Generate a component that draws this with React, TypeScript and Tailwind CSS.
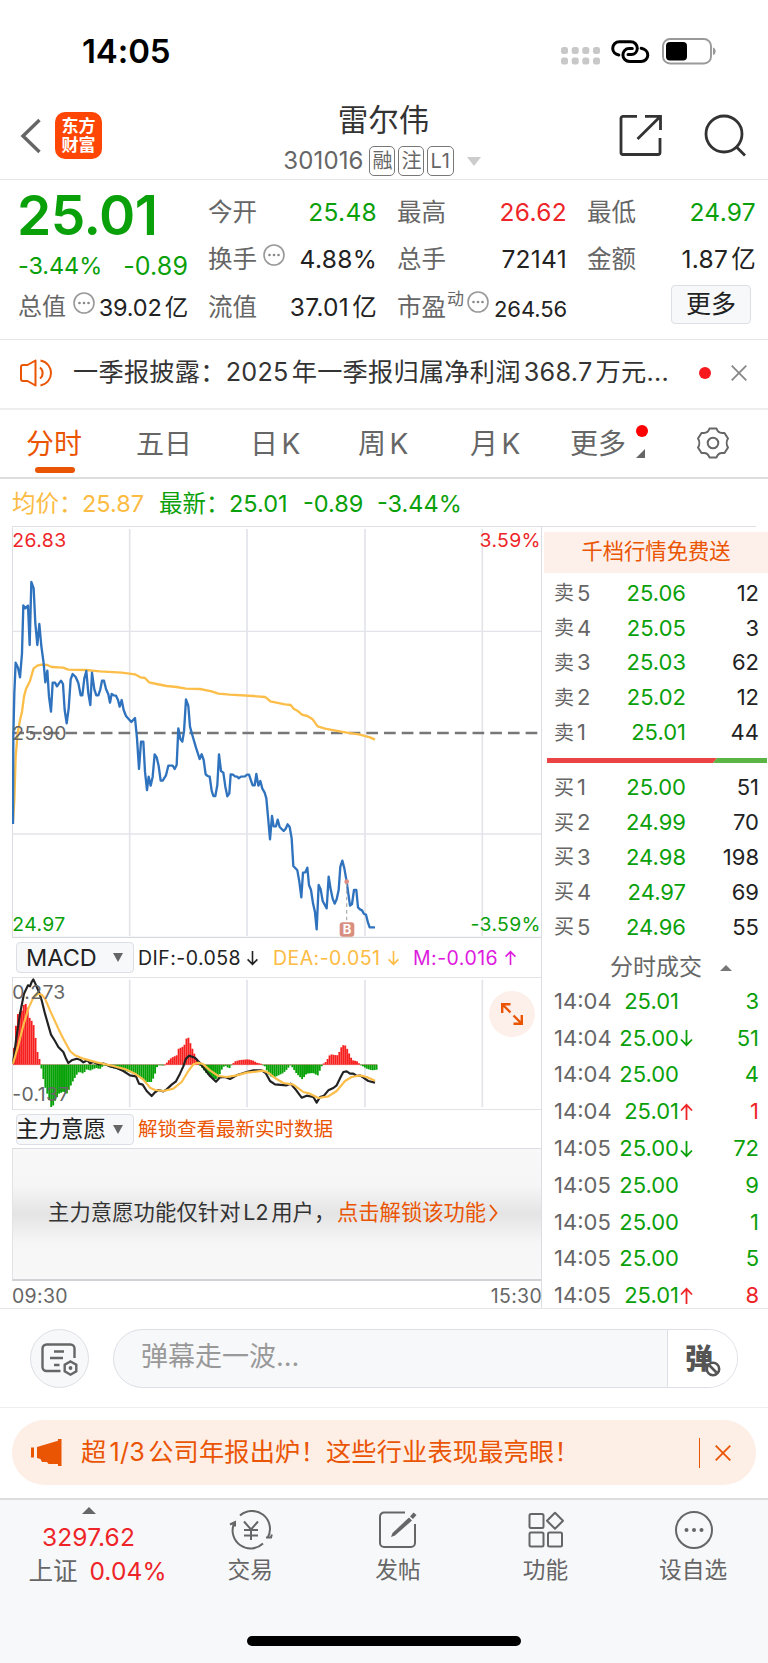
import type { ReactNode } from 'react';

const GREEN = 'text-[#0aa00a]';
const RED = 'text-[#ee2528]';

// 分时线坐标
const PRICE_LINE =
  '39,912 40,650 43,520 47,428 54,443 60,472 66,400 70,256 76,265 84,257 89,375 94,186 101,205 106,310 112,375 118,312 124,378 131,430 136,487 142,452 147,530 153,575 158,488 165,488 171,499 177,490 183,482 189,492 194,570 200,610 206,565 212,478 218,462 227,471 235,489 242,526 247,526 253,475 259,453 265,520 271,555 276,458 283,508 289,526 295,526 301,508 306,482 312,482 318,507 325,523 330,548 335,522 341,526 348,527 354,540 359,560 365,540 371,570 378,588 394,606 405,594 411,655 417,747 423,665 430,665 435,755 441,810 446,770 452,797 458,770 464,703 470,712 476,738 482,782 488,782 498,766 505,737 518,737 524,747 530,735 535,625 541,657 547,665 552,635 558,538 565,558 570,620 576,642 588,683 599,717 605,703 611,720 617,763 623,768 629,770 635,812 640,828 646,828 652,795 657,703 663,753 670,758 676,800 682,829 688,820 692,763 699,764 705,769 712,770 716,775 723,770 735,769 741,764 747,764 753,782 758,796 764,796 769,762 775,797 781,783 787,806 794,818 799,835 804,890 810,958 816,888 821,919 828,919 833,899 839,921 851,933 857,926 863,913 869,921 875,955 880,1038 892,1051 898,1085 904,1132 909,1058 916,1057 922,1043 927,1095 933,1110 939,1150 945,1177 950,1228 956,1095 962,1108 968,1143 980,1165 986,1070 992,1108 998,1136 1004,1151 1010,1138 1016,1110 1021,1040 1027,1022 1033,1045 1040,1085 1050,1157 1056,1152 1062,1110 1069,1110 1074,1162 1080,1168 1086,1171 1092,1182 1098,1184 1104,1208 1109,1222 1125,1222';

const AVG_LINE =
  '39,905 43,840 47,710 53,640 60,600 66,575 72,530 78,507 90,483 97,458 101,445 112,437 123,434 142,435 155,441 189,443 205,449 257,450 300,454 365,458 405,463 421,472 435,474 447,487 470,492 500,498 530,501 558,506 600,507 635,514 655,521 690,524 760,528 795,531 802,536 811,544 855,553 872,555 881,566 892,572 906,584 922,588 938,598 953,619 975,626 1040,638 1077,643 1110,652 1125,659';

const DIF_LINE =
  '39,400 48,330 60,250 72,190 84,165 90,168 95,155 100,147 106,160 118,188 125,210 135,250 145,285 153,313 165,332 175,350 190,365 197,382 205,398 215,390 230,385 240,388 250,396 262,390 270,399 280,395 295,402 312,400 330,408 350,413 370,422 390,435 408,438 417,460 428,463 440,482 455,497 465,486 475,479 490,483 500,477 515,463 528,453 540,430 550,408 558,385 568,376 585,382 600,398 615,418 630,437 648,454 660,441 675,440 690,446 710,435 740,425 760,420 785,420 797,428 810,452 825,462 860,465 872,460 885,475 905,502 920,496 940,500 950,517 960,500 972,496 985,480 1000,473 1010,465 1022,440 1030,425 1040,423 1050,430 1060,430 1070,437 1080,435 1090,442 1105,452 1125,457';

const DEA_LINE =
  '39,400 55,345 70,285 85,235 100,202 115,190 125,193 135,205 150,240 175,295 190,325 210,362 225,375 250,385 290,396 340,407 380,418 405,430 430,448 450,472 465,479 490,482 520,475 545,455 565,422 580,402 595,397 610,402 630,420 655,437 680,440 710,435 740,427 790,421 805,427 825,443 850,458 880,463 910,485 930,490 955,503 985,498 1010,482 1035,452 1055,440 1080,435 1100,440 1125,451';

// MACD 柱的关键点 [x, 柱顶 y]，0 轴在 403
const MACD_ZERO = 403;
const MACD_KEYS = [
  [40, 375], [48, 285], [53, 252], [60, 245], [66, 240], [72, 222], [80, 220], [84, 235], [90, 268], [97, 273], [101, 285],
  [107, 325], [113, 368], [119, 388], [125, 418], [130, 445], [136, 472], [142, 490], [148, 510], [154, 531], [160, 525],
  [166, 510], [177, 490], [190, 484], [202, 490], [208, 475], [220, 450], [232, 430], [238, 424], [250, 430], [262, 414],
  [268, 422], [280, 416], [292, 412], [298, 418], [309, 407], [318, 404], [327, 410], [345, 415], [375, 421], [405, 430],
  [417, 436], [430, 446], [440, 455], [455, 455], [464, 435], [470, 412], [476, 404], [488, 406], [497, 402], [505, 391],
  [515, 382], [530, 375], [536, 355], [547, 350], [553, 345], [559, 325], [566, 322], [571, 338], [577, 355], [583, 370],
  [590, 386], [597, 403], [606, 412], [620, 430], [640, 446], [650, 447], [658, 435], [664, 420], [670, 410], [676, 406],
  [685, 413], [691, 413], [696, 402], [706, 393], [720, 389], [745, 387], [760, 391], [770, 397], [786, 401], [795, 408],
  [806, 432], [815, 441], [825, 440], [850, 428], [860, 418], [872, 404], [880, 415], [890, 430], [907, 447], [920, 430],
  [940, 428], [953, 436], [965, 408], [970, 400], [980, 393], [986, 378], [992, 372], [1012, 375], [1018, 365],
  [1026, 346], [1034, 343], [1040, 352], [1052, 380], [1058, 390], [1070, 392], [1076, 398], [1084, 405], [1100, 415],
  [1116, 420], [1131, 418],
];

const macdBars = () => {
  const bars: { x: number; y: number }[] = [];
  for (let x = 42; x < 1131; x += 5.88) {
    const i = MACD_KEYS.findIndex(([kx]) => kx >= x);
    const [x0, y0] = MACD_KEYS[i - 1];
    const [x1, y1] = MACD_KEYS[i];
    bars.push({ x, y: y0 + ((y1 - y0) * (x - x0)) / (x1 - x0) });
  }
  return bars;
};

const SELLS = [
  ['卖5', '25.06', '12'],
  ['卖4', '25.05', '3'],
  ['卖3', '25.03', '62'],
  ['卖2', '25.02', '12'],
  ['卖1', '25.01', '44'],
];

const BUYS = [
  ['买1', '25.00', '51'],
  ['买2', '24.99', '70'],
  ['买3', '24.98', '198'],
  ['买4', '24.97', '69'],
  ['买5', '24.96', '55'],
];

const TRADES = [
  { time: '14:04', price: '25.01', dir: '', qty: '3', up: false },
  { time: '14:04', price: '25.00', dir: 'down', qty: '51', up: false },
  { time: '14:04', price: '25.00', dir: '', qty: '4', up: false },
  { time: '14:04', price: '25.01', dir: 'up', qty: '1', up: true },
  { time: '14:05', price: '25.00', dir: 'down', qty: '72', up: false },
  { time: '14:05', price: '25.00', dir: '', qty: '9', up: false },
  { time: '14:05', price: '25.00', dir: '', qty: '1', up: false },
  { time: '14:05', price: '25.00', dir: '', qty: '5', up: false },
  { time: '14:05', price: '25.01', dir: 'up', qty: '8', up: true },
];

const Arrow = ({ dir, className = '' }: { dir: string; className?: string }) => (
  <svg width="13" height="18" viewBox="0 0 13 18" fill="none" stroke="currentColor" strokeWidth="1.8" className={className}>
    {dir === 'up' ? <path d="M6.5 17V2M1 7.5l5.5-5.7L12 7.5" /> : <path d="M6.5 1v15M1 10.5l5.5 5.7 5.5-5.7" />}
  </svg>
);

const InfoDot = () => (
  <svg width="22" height="22" viewBox="0 0 22 22" className="shrink-0">
    <circle cx="11" cy="11" r="10" fill="none" stroke="#999" strokeWidth="1.6" />
    <circle cx="6.5" cy="11" r="1.3" fill="#888" />
    <circle cx="11" cy="11" r="1.3" fill="#888" />
    <circle cx="15.5" cy="11" r="1.3" fill="#888" />
  </svg>
);

const StatusBar = () => (
  <div className="h-[94px] flex items-start pl-[82px] pr-[52px] text-black">
    <span className="mt-[31px] text-[33px] leading-[41px] font-semibold tracking-[-0.1px]">14:05</span>
    <div className="ml-auto flex items-center mt-[38px] h-[27px]">
      <svg width="40" height="18" viewBox="0 0 40 18" fill="#c8c8c8" className="mt-[8px]">
        {[0, 10.7, 21.3, 32].map((x) => (
          <g key={x}>
            <rect x={x} y="0" width="7" height="7" rx="2.5" />
            <rect x={x} y="10.5" width="7" height="7" rx="2.5" />
          </g>
        ))}
      </svg>
      <svg width="39" height="24" viewBox="0 0 39 24" fill="none" stroke="#000" strokeWidth="3" strokeLinecap="round" className="ml-[10px]">
        <path d="M7.800 14.900C4.200 14.300 1.700 11.600 1.700 8.300c0-3.700 3-6.600 6.700-6.600h11.200c3.800 0 6.700 2.900 6.700 6.600 0 3.500-2.600 6.200-6 6.200H17" />
        <path d="M30.200 8.300c3.600.6 6.600 3.300 6.600 6.700 0 3.700-3 6.600-6.700 6.600H18.700c-3.800 0-6.800-2.900-6.800-6.600 0-3.500 2.600-6.400 6.100-6.400h3.300" />
      </svg>
      <svg width="54" height="27" viewBox="0 0 54 27" className="ml-[12px]">
        <rect x="1" y="1" width="48" height="24.500" rx="7" fill="none" stroke="#999" strokeWidth="1.900" />
        <rect x="4" y="4" width="21" height="18.500" rx="4" fill="#000" />
        <path d="M51 9.500c1.900.5 2.600 2 2.600 3.800s-.7 3.300-2.600 3.800z" fill="#999" />
      </svg>
    </div>
  </div>
);

const Tag = ({ children }: { children: ReactNode }) => (
  <span className="h-[30px] min-w-[26px] px-[2px] flex items-center justify-center border-[1.5px] border-[#777] rounded-[5px] text-[20px] leading-none">
    {children}
  </span>
);

const Header = () => (
  <div className="h-[86px] flex items-start border-b border-[#e6e6e6]">
    <div className="w-[256px] flex pl-[20px] pt-[18px]">
      <svg width="22" height="36" viewBox="0 0 22 36" fill="none" stroke="#666" strokeWidth="3.400" className="mt-[6px]">
        <path d="M19.500 2 3 18l16.500 16" />
      </svg>
      <div className="ml-[13px] w-[47px] h-[47px] rounded-[10px] bg-[#ff4605] text-white font-bold text-[17px] leading-[19px] flex flex-col items-center justify-center">
        <span>东方</span>
        <span>财富</span>
      </div>
    </div>
    <div className="w-[256px] flex flex-col items-center pt-[7px]">
      <h1 className="text-[30.500px] leading-[38px] text-[#333] -ml-px">雷尔伟</h1>
      <div className="flex items-center h-[30px] mt-[7px] gap-[3px] text-[#666] -ml-[4px]">
        <span className="text-[24px] mr-[3px] tracking-[0.100px]">301016</span>
        <Tag>融</Tag>
        <Tag>注</Tag>
        <Tag>
          <span className="tracking-[0.800px]">L1</span>
        </Tag>
        <svg width="14" height="9" viewBox="0 0 14 9" fill="#ccc" className="ml-[10px]">
          <path d="M0 0h14L7 9z" />
        </svg>
      </div>
    </div>
    <div className="flex-1 flex justify-end gap-[42px] pr-[21px] pt-[20px]">
      <svg width="43" height="43" viewBox="0 0 43 43" fill="none" stroke="#333" strokeWidth="2.800">
        <path d="M18 2.300H4a2 2 0 0 0-2 2v34.200a2 2 0 0 0 2 2h35a2 2 0 0 0 2-2V24" />
        <path d="M26 2.300h15.500V16M41 2.800 18.500 25" />
      </svg>
      <svg width="43" height="43" viewBox="0 0 43 43" fill="none" stroke="#333" strokeWidth="2.800">
        <circle cx="20" cy="20" r="18" />
        <path d="M32.500 33 41 41.500" />
      </svg>
    </div>
  </div>
);

const Stat = ({ label, value, color = 'text-[#222]', info = false }: { label: string; value: string; color?: string; info?: boolean }) => (
  <div className="h-[47.500px] flex items-center justify-between">
    <span className="flex items-center gap-[6px] text-[24.500px] text-[#666]">
      {label}
      {info && <span className="-mt-[9px]"><InfoDot /></span>}
    </span>
    <span className={`text-[24.500px] tracking-[0.300px] [text-autospace:normal] ${color}`}>{value}</span>
  </div>
);

const Quote = () => (
  <div className="h-[160px] border-b border-[#e6e6e6] flex pl-[18px] pr-[12px] gap-[20px]">
    <div className="w-[170px]">
      <div className={`text-[55px] leading-[54px] mt-[8px] font-semibold tracking-[-0.500px] -ml-px ${GREEN}`}>25.01</div>
      <div className={`flex justify-between items-center h-[47px] ${GREEN}`}>
        <span className="text-[23.500px] tracking-[-0.100px]">-3.44%</span>
        <span className="text-[25px] tracking-[0.100px] mt-[2px]">-0.89</span>
      </div>
      <div className="flex items-center h-[36px]">
        <span className="text-[24px] text-[#666]">总值</span>
        <span className="ml-[7px] -mt-[9px]"><InfoDot /></span>
        <span className="ml-auto text-[23.500px] tracking-[-0.150px] text-[#222] mt-[2px] [text-autospace:normal] whitespace-nowrap">39.02亿</span>
      </div>
    </div>
    <div className="w-[169px] pt-[8.500px]">
      <Stat label="今开" value="25.48" color={GREEN} />
      <Stat label="换手" value="4.88%" info />
      <Stat label="流值" value="37.01亿" />
    </div>
    <div className="w-[170px] pt-[8.500px]">
      <Stat label="最高" value="26.62" color={RED} />
      <Stat label="总手" value="72141" />
      <div className="h-[47.500px] flex items-center text-[24.500px] text-[#666]">
        市盈
        <span className="text-[17px] -mt-[16px] ml-[1px]">动</span>
        <span className="-mt-[10px] ml-[3px]"><InfoDot /></span>
        <span className="ml-auto text-[22px] tracking-[-0.100px] text-[#222] mt-[4px]">264.56</span>
      </div>
    </div>
    <div className="w-[169px] pt-[8.500px]">
      <Stat label="最低" value="24.97" color={GREEN} />
      <Stat label="金额" value="1.87亿" />
      <button className="ml-auto mr-[5px] mt-[1.500px] w-[80px] h-[39px] flex items-center justify-center rounded-[4px] border border-[#dcdfe5] bg-[#f7f8fa] text-[25px] text-[#222]">
        更多
      </button>
    </div>
  </div>
);

const Notice = () => (
  <div className="h-[70px] border-b-2 border-[#eee] flex items-center pl-[20px] pr-[21px] pb-[2px]">
    <svg width="34" height="28" viewBox="0 0 34 28" fill="none" stroke="#ea5504" strokeWidth="2" strokeLinejoin="round">
      <path d="M15.500 1.500 7.500 6H3a2 2 0 0 0-2 2v12a2 2 0 0 0 2 2h4.500l8 4.500z" />
      <path d="M20 8.500c3.500 2.500 3.500 8.500 0 11M20.500 1.500c14 3 14 22 0 25" />
    </svg>
    <span className="ml-[19px] text-[25.200px] text-[#333] whitespace-nowrap [text-autospace:normal] tracking-[0.250px]">
      一季报披露：2025年一季报归属净利润368.7万元...
    </span>
    <span className="ml-auto w-[12px] h-[12px] rounded-full bg-[#f8191e]" />
    <svg width="16" height="16" viewBox="0 0 16 16" stroke="#888" strokeWidth="1.800" className="ml-[20px]">
      <path d="m.7.7 14.600 14.600M15.300.7.7 15.300" />
    </svg>
  </div>
);

const Tabs = () => (
  <div className="h-[69px] border-b-2 border-[#ddd] flex items-start pt-[13px] text-[28px] leading-[42px] text-[#666] pl-[26px] [text-autospace:normal]">
    <div className="w-[110px] text-[#ea5504]">
      分时
      <div className="w-[40px] h-[6px] rounded-full bg-[#ea5504] ml-[9px] mt-[2px]" />
    </div>
    <div className="w-[114px]">五日</div>
    <div className="w-[108px]">日K</div>
    <div className="w-[112px]">周K</div>
    <div className="w-[100px]">月K</div>
    <div className="flex">
      更多
      <div className="ml-[10px] w-[14px]">
        <div className="w-[12px] h-[12px] rounded-full bg-[#fe0000] mt-[2px]" />
        <svg width="9" height="9" viewBox="0 0 9 9" fill="#666" className="mt-[12px]">
          <path d="M9 0v9H0z" />
        </svg>
      </div>
    </div>
    <svg width="34" height="32" viewBox="0 0 34 32" fill="none" stroke="#666" strokeWidth="2" strokeLinejoin="round" className="ml-[46px] mt-[4px]">
      <path d="M13.500 1.500h7c1 3 3 4.500 5.500 4.500h2.500l3.500 5.500c-1.700 2.500-1.700 6.500 0 9L28.500 26H26c-2.500 0-4.500 1.500-5.500 4.500h-7C12.500 27.500 10.500 26 8 26H5.500L2 20.500c1.700-2.500 1.700-6.500 0-9L5.500 6H8c2.500 0 4.500-1.500 5.500-4.500z" />
      <circle cx="17" cy="16" r="5.300" />
    </svg>
  </div>
);

const Summary = () => (
  <div className="h-[48px] ml-[12px] w-[744px] border-b border-[#dfe0e5] flex items-center pt-[2px] text-[23.500px] whitespace-nowrap">
    <span className="text-[#fcbb42] w-[147px] flex">
      <span className="w-[70px]">均价：</span>
      <span>25.87</span>
    </span>
    <span className={`flex ${GREEN}`}>
      <span className="w-[70px]">最新：</span>
      <span className="w-[74px]">25.01</span>
      <span className="w-[74px]">-0.89</span>
      <span>-3.44%</span>
    </span>
  </div>
);

const PriceChart = () => (
  <svg viewBox="36 21 1590 1233" className="w-[530px] h-[411px] block" fill="none">
    <g stroke="#e3e4ea" strokeWidth="5">
      <path d="M389 27V1248M741 27V1248M1095 27V1248M1447 27V1248" />
      <path d="M37 334H1623M37 942H1623" strokeWidth="4" />
      <path d="M37.500 22V1254" strokeWidth="3" stroke="#dcdde2" />
      <path d="M37 1252.500H1623" stroke="#d8d9dd" />
    </g>
    <path d="M37 639H1614" stroke="#777" strokeWidth="7" strokeDasharray="35 18.100" />
    <polyline points={AVG_LINE} stroke="#fcbe49" strokeWidth="7" strokeLinejoin="round" />
    <polyline points={PRICE_LINE} stroke="#2f72bd" strokeWidth="7" strokeLinejoin="round" />
    <g className="text-[58px] tracking-[1.200px]">
      <text x="37" y="82" fill="#ee2528">26.83</text>
      <text x="37" y="659" fill="#666">25.90</text>
      <text x="37" y="1233" fill="#0aa00a">24.97</text>
      <text x="1623" y="82" textAnchor="end" fill="#ee2528">3.59%</text>
      <text x="1623" y="1233" textAnchor="end" fill="#0aa00a">-3.59%</text>
    </g>
    <path d="M1040 1090V1207" stroke="#aaa" strokeWidth="3.500" strokeDasharray="11 9" />
    <circle cx="1040" cy="1085" r="7" fill="#dd8c7e" />
    <rect x="1019" y="1207" width="44" height="43" rx="9" fill="#d98f80" />
    <text x="1041" y="1243" textAnchor="middle" fill="#fff" className="text-[39px] font-bold">B</text>
  </svg>
);

const IndicatorSelect = ({ label, className }: { label: string; className: string }) => (
  <button className="w-[118px] h-[31px] rounded-[4px] border border-[#dcdfe5] bg-[#f7f8fa] flex items-center text-[22.500px] leading-none text-[#222] whitespace-nowrap">
    <span className={className}>{label}</span>
    <svg width="10" height="9" viewBox="0 0 10 9" fill="#666" className="shrink-0">
      <path d="M0 0h10L5 9z" />
    </svg>
  </button>
);

const MacdChart = () => (
  <div className="relative h-[133px] border-y border-[#e2e3e6]">
    <svg viewBox="36 140 1590 399" className="w-[530px] h-[133px] block -mt-px" fill="none">
      <path d="M389 148V531M741 148V531M1095 148V531M1447 148V531" stroke="#e3e4ea" strokeWidth="5" />
      <path d="M37.500 140V539" stroke="#dcdde2" strokeWidth="3" />
      <path d="M39 403H1131" stroke="#c33" strokeWidth="1.500" />
      {macdBars().map(({ x, y }) => (
        <rect
          key={x}
          x={x - 2.9}
          y={Math.min(y, MACD_ZERO)}
          width="5.700"
          height={Math.max(Math.abs(y - MACD_ZERO), 2)}
          fill={y < MACD_ZERO ? '#f6201f' : '#06a106'}
        />
      ))}
      <polyline points={DIF_LINE} stroke="#222" strokeWidth="6.500" strokeLinejoin="round" />
      <polyline points={DEA_LINE} stroke="#fcbe49" strokeWidth="6.500" strokeLinejoin="round" />
      <g className="text-[58px] tracking-[1px]" fill="#666">
        <text x="37" y="205">0.273</text>
        <text x="37" y="512">-0.137</text>
      </g>
    </svg>
    <button className="absolute left-[477px] top-[13px] w-[46px] h-[46px] rounded-full bg-[#fdf0ea] flex items-center justify-center">
      <svg width="24" height="24" viewBox="0 0 24 24" fill="none" stroke="#ea5504" strokeWidth="2.400">
        <path d="M10.500 2.200H2.200V11M2.500 2.500l8 8M13.500 21.800h8.300V13M21.500 21.500l-8-8" />
      </svg>
    </button>
  </div>
);

const ChartColumn = () => (
  <div className="w-[530px] shrink-0 border-r border-[#dcdde2]">
    <PriceChart />
    <div className="h-[38.500px] flex items-center pl-[4px] pt-px text-[19.500px] whitespace-nowrap">
      <IndicatorSelect label="MACD" className="w-[96px] pl-[9px] text-left text-[23.500px]" />
      <span className="ml-[4px] w-[135px] flex items-center text-[#222] pt-px">
        <span className="w-[108px] tracking-[0.450px]">DIF:-0.058</span>
        <Arrow dir="down" className="h-[16px]" />
      </span>
      <span className="w-[140px] flex items-center text-[#fcbb42] pt-px">
        <span className="w-[114px] tracking-[0.450px]">DEA:-0.051</span>
        <Arrow dir="down" className="h-[16px]" />
      </span>
      <span className="flex items-center text-[#dd1add] pt-px">
        <span className="w-[91px] tracking-[0.450px]">M:-0.016</span>
        <Arrow dir="up" className="h-[16px]" />
      </span>
    </div>
    <MacdChart />
    <div className="h-[38px] flex items-center pl-[4px] pt-px whitespace-nowrap">
      <IndicatorSelect label="主力意愿" className="w-[96px] text-left -indent-px" />
      <span className="ml-[4px] text-[19.500px] text-[#ea5504] pt-px">解锁查看最新实时数据</span>
    </div>
    <div className="h-[133.500px] border-t border-b-2 border-l border-t-[#dcdde2] border-l-[#e2e3e6] border-b-[#d0d2d6] flex items-center pl-[35px] pb-px text-[21.300px] whitespace-nowrap text-[#333] bg-[linear-gradient(180deg,#f8f8f8_0%,#f6f6f6_28%,#ececec_40%,#e4e4e4_50%,#ececec_60%,#f6f6f6_72%,#f8f8f8_100%)]">
      <span className="[text-autospace:normal] w-[289px] tracking-[0.100px]">主力意愿功能仅针对L2用户，</span>
      <span className="text-[#ea5504] flex items-center">
        点击解锁该功能
        <svg width="9" height="18" viewBox="0 0 9 18" fill="none" stroke="#ea5504" strokeWidth="1.800" className="ml-[3px]">
          <path d="m1 1 6.500 8L1 17" />
        </svg>
      </span>
    </div>
    <div className="h-[27px] flex items-center justify-between text-[19.500px] tracking-[0.300px] text-[#666] pt-[4px]">
      <span>09:30</span>
      <span className="-mr-px">15:30</span>
    </div>
  </div>
);

const LevelRow = ({ row }: { row: string[] }) => (
  <div className="h-[34.800px] flex items-center pl-[10px] pr-[9px] text-[22px]">
    <span className="w-[51px] flex items-center gap-[3px] text-[#666]">
      <span className="text-[20px]">{row[0][0]}</span>
      {row[0][1]}
    </span>
    <span className={`w-[81px] text-right ${GREEN}`}>{row[1]}</span>
    <span className="flex-1 text-right text-[#222]">{row[2]}</span>
  </div>
);

const OrderBook = () => (
  <div className="flex-1 pl-[2px]">
    <div className="mt-[5px] h-[41px] bg-[#fdf0ea] text-[#ea5504] text-[21.300px] flex items-center justify-center pb-[2px]">
      千档行情免费送
    </div>
    <div className="pt-[3px]">
      {SELLS.map((row) => (
        <LevelRow key={row[0]} row={row} />
      ))}
    </div>
    <svg viewBox="0 0 220 5" className="w-[220px] h-[5px] ml-[3px] mt-[8px] block">
      <path d="M0 0h170l-4 5H0z" fill="#ea4444" />
      <path d="M170 0h50v5h-54z" fill="#5ab545" />
    </svg>
    <div className="pt-[7.500px]">
      {BUYS.map((row) => (
        <LevelRow key={row[0]} row={row} />
      ))}
    </div>
    <div className="h-[38.500px] flex items-center pl-[66px] text-[23px] text-[#666] pt-[8px]">
      分时成交
      <svg width="12" height="6" viewBox="0 0 12 6" fill="#777" className="ml-[18px]">
        <path d="M6 0l6 6H0z" />
      </svg>
    </div>
    {TRADES.map((t, i) => (
      <div key={i} className="h-[36.800px] flex items-center pl-[10px] pr-[9px] text-[22px]">
        <span className="w-[59px] text-[#666]">{t.time}</span>
        <span className={`w-[66px] text-right ${GREEN}`}>{t.price}</span>
        <span className={`ml-[1px] w-[13px] ${t.up ? RED : GREEN}`}>{t.dir && <Arrow dir={t.dir} />}</span>
        <span className={`flex-1 text-right ${t.up ? RED : GREEN}`}>{t.qty}</span>
      </div>
    ))}
  </div>
);

const DanmuBar = () => (
  <div className="h-[99px] border-b border-[#eee] flex items-start pt-[20px] pl-[30px]">
    <button className="w-[59px] h-[59px] rounded-full border border-[#dcdfe5] bg-[#f7f8fa] flex items-center justify-center">
      <svg width="37" height="34" viewBox="0 0 37 34" fill="none" stroke="#666" strokeWidth="2.400" className="mt-[2px]">
        <path d="M19.500 28H5.500A4 4 0 0 1 1.500 24V5.500a4 4 0 0 1 4-4h24a4 4 0 0 1 4 4V15" />
        <path d="M13 8.500h10M9 15h13M13 22h5.500" />
        <path d="m29.500 18.500 5.800 3.300v6.600l-5.800 3.300-5.800-3.300v-6.600z" />
        <circle cx="29.500" cy="25" r="1.900" fill="#666" stroke="none" />
      </svg>
    </button>
    <div className="ml-[24px] w-[625px] h-[59px] rounded-full border border-[#dcdfe5] bg-[#f7f8fa] flex items-center overflow-hidden">
      <span className="flex-1 pl-[27px] pb-[3px] text-[27px] text-[#999]">弹幕走一波...</span>
      <span className="w-[70px] h-full bg-white border-l border-[#dcdfe5] flex items-center pl-[17px] text-[#555]">
        <span className="text-[28px] font-black">弹</span>
        <svg width="16" height="16" viewBox="0 0 15 15" fill="#fff" stroke="#555" strokeWidth="2.400" className="-ml-[8px] mt-[21px]">
          <circle cx="7.500" cy="7.500" r="5.800" />
          <path d="m4 4 7 7" />
        </svg>
      </span>
    </div>
  </div>
);

const Promo = () => (
  <div className="h-[92px] pt-[12px] px-[12px] border-b-2 border-[#ddd]">
    <div className="h-[65px] rounded-full bg-[#fdeee6] flex items-center pl-[19px] pr-[25px] text-[#ea5504] text-[25.200px]">
      <svg width="31" height="27" viewBox="0 0 31 27" fill="#ea5504">
        <path d="M0 8.500h3v10H0zM6 8 27 1.800V0h3.500v27H27v-2h-9.500l-1.500-2h-5l-1.500-3L6 19z" />
      </svg>
      <span className="ml-[19px] [text-autospace:normal] tracking-[0.200px] whitespace-nowrap">超1/3公司年报出炉！这些行业表现最亮眼！</span>
      <span className="ml-auto w-[1.500px] h-[30px] bg-[#ea5504]" />
      <svg width="16" height="16" viewBox="0 0 16 16" stroke="#ea5504" strokeWidth="1.800" className="ml-[15px]">
        <path d="m.7.7 14.600 14.600M15.300.7.7 15.300" />
      </svg>
    </div>
  </div>
);

const NavItem = ({ label, children }: { label: string; children: ReactNode }) => (
  <div className="w-[147.600px] flex flex-col items-center pt-[10px] text-[22.700px] text-[#666]">
    <svg width="44" height="40" viewBox="0 0 44 40" fill="none" stroke="#666" strokeWidth="2">
      {children}
    </svg>
    <span className="leading-[30px] mt-[5px] -ml-px">{label}</span>
  </div>
);

const BottomNav = () => (
  <div className="h-[163px] bg-[#f7f8fa]">
    <div className="flex h-[136px]">
      <div className="w-[177px] flex flex-col items-center pt-[7px]">
        <svg width="14" height="7" viewBox="0 0 14 7" fill="#666">
          <path d="M7 0l7 7H0z" />
        </svg>
        <span className={`text-[24.500px] leading-[30px] mt-[8px] tracking-[0.100px] ${RED}`}>3297.62</span>
        <div className="flex items-center text-[24.500px] leading-[34px] mt-[2px] gap-[12px] pl-[18px]">
          <span className="text-[#666]">上证</span>
          <span className={`tracking-[0.100px] ${RED}`}>0.04%</span>
        </div>
      </div>
      <div className="flex">
        <NavItem label="交易">
          <path d="M11 5.500A18 18 0 0 1 38.800 27.500M37 27.500h5l.8-3M34 33.500A18 18 0 0 1 5 13.500M1 14.500l5-2.500v4.500" />
          <path d="m15 11.500 7 8 7-8M22 19.500V30M15 20h14M15 25.500h14" />
        </NavItem>
        <NavItem label="发帖">
          <path d="M29 2.500H8a4 4 0 0 0-4 4V33a4 4 0 0 0 4 4h27a4 4 0 0 0 4-4V14" />
          <path d="m34 6.500 3.500-4 3 2.500-3.500 4z" fill="#666" stroke="none" />
          <path d="M33 7.500 36 10.500 19 25.500l-4 1.500 1.500-4z" fill="#666" stroke="none" />
        </NavItem>
        <NavItem label="功能">
          <rect x="5.500" y="4" width="14" height="14" rx="1.500" />
          <rect x="5.500" y="22.500" width="14" height="14" rx="1.500" />
          <rect x="24" y="22.500" width="14" height="14" rx="1.500" />
          <path d="m31 2.800 8 8-8 8-8-8z" strokeLinejoin="round" />
        </NavItem>
        <NavItem label="设自选">
          <circle cx="22" cy="20" r="18" />
          <g fill="#666" stroke="none">
            <circle cx="14.500" cy="20" r="2" />
            <circle cx="22" cy="20" r="2" />
            <circle cx="29.500" cy="20" r="2" />
          </g>
        </NavItem>
      </div>
    </div>
    <div className="mx-auto w-[274px] h-[10px] rounded-full bg-black" />
  </div>
);

export default function App() {
  return (
    <div className="w-[768px] h-[1663px] bg-white overflow-hidden font-[Inter,'Noto_Sans_CJK_SC',sans-serif]">
      <StatusBar />
      <Header />
      <Quote />
      <Notice />
      <Tabs />
      <Summary />
      <div className="h-[782px] border-b border-[#e6e6e6] flex pl-[12px]">
        <ChartColumn />
        <OrderBook />
      </div>
      <DanmuBar />
      <Promo />
      <BottomNav />
    </div>
  );
}
